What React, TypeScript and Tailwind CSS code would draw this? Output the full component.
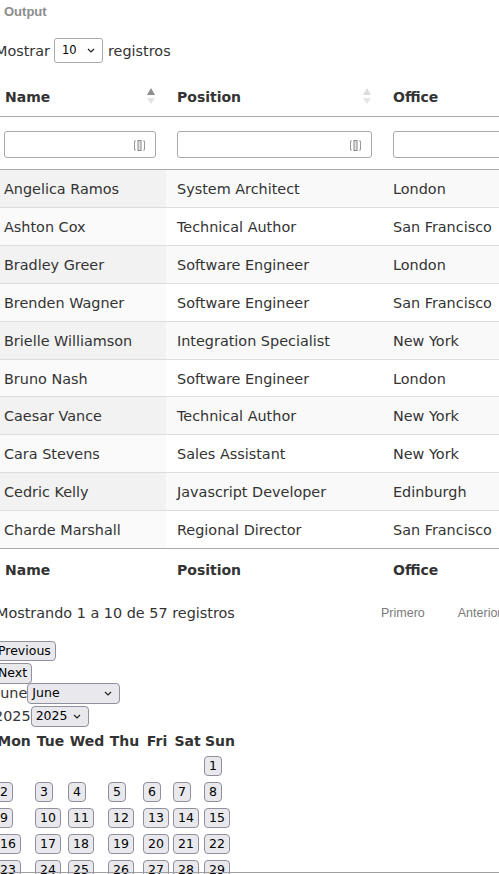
import React from 'react';

const rows: [string, string, string][] = [
	['Angelica Ramos', 'System Architect', 'London'],
	['Ashton Cox', 'Technical Author', 'San Francisco'],
	['Bradley Greer', 'Software Engineer', 'London'],
	['Brenden Wagner', 'Software Engineer', 'San Francisco'],
	['Brielle Williamson', 'Integration Specialist', 'New York'],
	['Bruno Nash', 'Software Engineer', 'London'],
	['Caesar Vance', 'Technical Author', 'New York'],
	['Cara Stevens', 'Sales Assistant', 'New York'],
	['Cedric Kelly', 'Javascript Developer', 'Edinburgh'],
	['Charde Marshall', 'Regional Director', 'San Francisco'],
];

const weeks: (number | null)[][] = [
	[null, null, null, null, null, null, 1],
	[2, 3, 4, 5, 6, 7, 8],
	[9, 10, 11, 12, 13, 14, 15],
	[16, 17, 18, 19, 20, 21, 22],
	[23, 24, 25, 26, 27, 28, 29],
	[30, null, null, null, null, null, null],
];

const days = ['Mon', 'Tue', 'Wed', 'Thu', 'Fri', 'Sat', 'Sun'];

const Chevron = () => (
	<svg width="8" height="5" viewBox="0 0 8 5" className="shrink-0">
		<path d="M1 1 L4 4 L7 1" fill="none" stroke="#222" strokeWidth="1.2" />
	</svg>
);

const SortIcon = ({ active }: { active?: boolean }) => (
	<span className="absolute right-[11px] top-[13px] flex flex-col gap-[3px]">
		<svg width="8" height="7" viewBox="0 0 8 7">
			<path d="M4 0 L8 7 L0 7 Z" fill={active ? '#8f8f8f' : '#dcdcdc'} />
		</svg>
		<svg width="8" height="6" viewBox="0 0 8 6">
			<path d="M0 0 L8 0 L4 6 Z" fill={active ? '#e3e3e3' : '#e6e6e6'} />
		</svg>
	</span>
);

const CursorIcon = () => (
	<svg width="13" height="11" viewBox="0 0 13 11" className="absolute right-[9px] top-[8px]">
		<path d="M3 1 H1.5 V10 H3" fill="none" stroke="#9a9a9a" strokeWidth="1" />
		<rect x="5" y="0.5" width="3" height="10" fill="#e4e4e4" stroke="#8a8a8a" strokeWidth="1" />
		<path d="M10 1 H11.5 V10 H10" fill="none" stroke="#9a9a9a" strokeWidth="1" />
	</svg>
);

const FilterInput = ({ width }: { width: string }) => (
	<div className={`relative h-[27px] ${width} rounded-[3px] border border-[#aaaaaa] bg-white`}>
		<CursorIcon />
	</div>
);

const NativeButton = ({ children, className = '' }: { children: React.ReactNode; className?: string }) => (
	<button
		type="button"
		className={`h-[20px] rounded-[4px] border border-[#8f8f9d] bg-[#e9e9ed] px-[4px] text-[12.5px] leading-[14px] text-black ${className}`}>
		{children}
	</button>
);

export default function App() {
	return (
		<div
			className="relative h-[874px] w-[499px] overflow-hidden bg-white text-[#333333]"
			style={{ fontFamily: '"DejaVu Sans", Verdana, sans-serif' }}>
			<div
				className="pl-[4px] pt-[4px] text-[13px] font-bold leading-[16px] text-[#8c8c8c]"
				style={{ fontFamily: '"Liberation Sans", Arial, sans-serif' }}>
				Output
			</div>

			<div className="ml-[-5px]">
				{/* length menu */}
				<div className="mt-[18px] flex h-[25px] items-center text-[14.4px]">
					<span className="pt-[2px]">Mostrar</span>
					<div className="ml-[4px] flex h-[25px] w-[49px] items-center justify-between rounded-[3px] border border-[#aaaaaa] pl-[7px] pr-[7px] text-[11.5px] text-black">
						<span>10</span>
						<Chevron />
					</div>
					<span className="ml-[5px] pt-[2px]">registros</span>
				</div>

				{/* table */}
				<table className="mt-[12px] w-[720px] table-fixed border-collapse text-left text-[14px]">
					<colgroup>
						<col className="w-[171px]" />
						<col className="w-[216px]" />
						<col className="w-[170px]" />
						<col className="w-[163px]" />
					</colgroup>
					<thead>
						<tr className="border-b border-[#aaaaaa]">
							<th className="relative pb-[8px] pt-[12px] pl-[10px] pr-[18px] font-bold leading-[21px]">
								Name
								<SortIcon active />
							</th>
							<th className="relative pb-[8px] pt-[12px] pl-[11px] pr-[18px] font-bold leading-[21px]">
								Position
								<SortIcon />
							</th>
							<th className="relative pb-[8px] pt-[12px] pl-[11px] pr-[18px] font-bold leading-[21px]">
								Office
								<SortIcon />
							</th>
							<th className="relative pb-[8px] pt-[12px] pl-[11px] pr-[18px] font-bold leading-[21px]">
								Age
								<SortIcon />
							</th>
						</tr>
						<tr className="border-b border-[#aaaaaa]">
							<th className="pb-[11px] pl-[9px] pr-[10px] pt-[14px]">
								<FilterInput width="w-[152px]" />
							</th>
							<th className="pb-[11px] pl-[11px] pr-[10px] pt-[14px]">
								<FilterInput width="w-[195px]" />
							</th>
							<th className="pb-[11px] pl-[11px] pr-[10px] pt-[14px]">
								<FilterInput width="w-[149px]" />
							</th>
							<th className="pb-[11px] pl-[11px] pr-[10px] pt-[14px]">
								<FilterInput width="w-[142px]" />
							</th>
						</tr>
					</thead>
					<tbody className="text-[14.4px]">
						{rows.map(([name, position, office], i) => {
							const odd = i % 2 === 0;
							return (
								<tr key={name} className={i > 0 ? 'border-t border-[#dddddd]' : ''}>
									<td className={`pb-[7px] pt-[9px] pl-[9px] pr-[10px] leading-[20.9px] ${odd ? 'bg-[#f2f2f2]' : 'bg-[#fafafa]'}`}>
										{name}
									</td>
									<td className={`pb-[7px] pt-[9px] pl-[11px] pr-[10px] leading-[20.9px] ${odd ? 'bg-[#f9f9f9]' : 'bg-white'}`}>
										{position}
									</td>
									<td className={`whitespace-nowrap pb-[7px] pt-[9px] pl-[11px] pr-[10px] leading-[20.9px] ${odd ? 'bg-[#f9f9f9]' : 'bg-white'}`}>
										{office}
									</td>
									<td className={`pb-[7px] pt-[9px] pl-[11px] pr-[10px] leading-[20.9px] ${odd ? 'bg-[#f9f9f9]' : 'bg-white'}`}>
										{[61, 47, 41, 28, 22, 38, 21, 46, 22, 36][i]}
									</td>
								</tr>
							);
						})}
					</tbody>
					<tfoot>
						<tr className="border-t border-[#aaaaaa]">
							<th className="pb-[9px] pt-[11px] pl-[10px] pr-[18px] font-bold leading-[21px]">Name</th>
							<th className="pb-[9px] pt-[11px] pl-[11px] pr-[18px] font-bold leading-[21px]">Position</th>
							<th className="pb-[9px] pt-[11px] pl-[11px] pr-[18px] font-bold leading-[21px]">Office</th>
							<th className="pb-[9px] pt-[11px] pl-[11px] pr-[18px] font-bold leading-[21px]">Age</th>
						</tr>
					</tfoot>
				</table>

				{/* info + pagination */}
				<div className="flex items-center pt-[13px] text-[14.4px] leading-[21px]">
					<div className="w-[386px] shrink-0 pl-[1px]">Mostrando 1 a 10 de 57 registros</div>
					<div
						className="flex shrink-0 items-center text-[12.5px] text-[#7a7a7a]"
						style={{ fontFamily: '"Liberation Sans", Arial, sans-serif' }}>
						<span>Primero</span>
						<span className="ml-[33px]">Anterior</span>
						<span className="ml-[33px]">1</span>
					</div>
				</div>

				{/* calendar */}
				<div className="mt-[16px] ml-[-2px] text-[14.4px]">
					<div className="h-[22px]">
						<NativeButton>Previous</NativeButton>
					</div>
					<div className="h-[21px]">
						<NativeButton className="h-[21px]">Next</NativeButton>
					</div>
					<div className="flex h-[23px] items-start">
						<span className="ml-[3px] leading-[21px]">June</span>
						<div className="flex h-[21px] w-[93px] items-center justify-between rounded-[4px] border border-[#8f8f9d] bg-[#e9e9ed] pl-[4px] pr-[7px] text-[12.5px] text-black">
							<span>June</span>
							<Chevron />
						</div>
					</div>
					<div className="flex h-[23px] items-start">
						<span className="ml-[1px] leading-[21px]">2025</span>
						<div className="flex h-[21px] w-[58px] items-center justify-between rounded-[4px] border border-[#8f8f9d] bg-[#e9e9ed] pl-[4px] pr-[7px] text-[12.5px] text-black">
							<span>2025</span>
							<Chevron />
						</div>
					</div>

					<div className="ml-[1px] mt-[2px] grid grid-cols-[40px_33px_40px_35px_30px_31px_34px] text-[14px]">
						{days.map((d) => (
							<div key={d} className="h-[22px] text-center font-bold leading-[20px]">
								{d}
							</div>
						))}
						{weeks.flat().map((n, i) => (
							<div key={i} className="flex h-[26px] items-center pl-[1px]">
								{n !== null && <NativeButton>{n}</NativeButton>}
							</div>
						))}
					</div>
				</div>
			</div>

			<div className="absolute bottom-[1px] left-0 right-0 h-px bg-[#a0a0a0]" />
		</div>
	);
}
